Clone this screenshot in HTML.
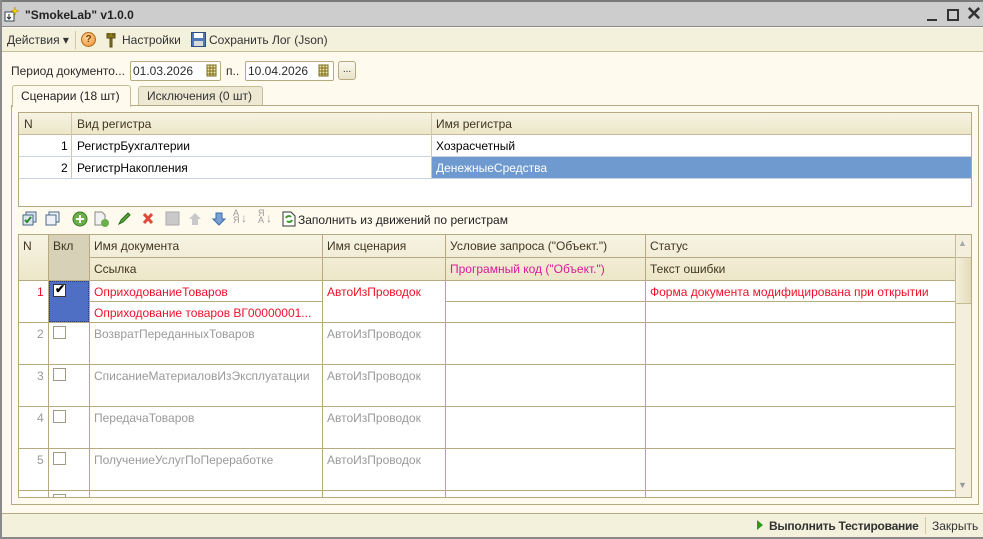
<!DOCTYPE html>
<html><head><meta charset="utf-8"><style>
*{box-sizing:border-box;margin:0;padding:0}
body{width:983px;height:539px;position:relative;overflow:hidden;background:#fefaee;font-family:"Liberation Sans",sans-serif;font-size:12px;color:#2b2b2b}
.a{position:absolute}
.t{position:absolute;white-space:nowrap}
.hd{background:linear-gradient(#f6f3e3,#ede6c8)}
.hl{position:absolute;height:1px;background:#b7aa80}
.vl{position:absolute;width:1px;background:#b7aa80}
.red{color:#f0102a}
.gr{color:#9a9a9a}
.cb{position:absolute;width:13px;height:13px;border:1px solid #a09a86;background:#fff}
</style></head><body>
<div class="a" style="left:0;top:0;width:983px;height:27px;background:#cdcdcd;border-top:2px solid #7a7a7a;border-bottom:1px solid #8a8a8a"></div>
<div class="a" style="left:0;top:0;width:2px;height:539px;background:#8a8a8a"></div>
<div class="a" style="left:0;top:537px;width:983px;height:2px;background:#8a8a8a"></div>
<svg class="a" style="left:4px;top:6px" width="16" height="16"><rect x="1" y="6" width="9" height="9" fill="#fff" stroke="#345"/><path d="M5 8v5M3 11l2 2 2-2" stroke="#222" fill="none"/><path d="M11 1l1 3 3 1-3 1-1 3-1-3-3-1 3-1z" fill="#f5d21a" stroke="#b89000" stroke-width=".5"/></svg>
<div class="t" style="left:25px;top:8px;font-weight:bold;font-size:12px;color:#222">"SmokeLab" v1.0.0</div>
<div class="a" style="left:927px;top:19px;width:10px;height:2px;background:#333"></div>
<div class="a" style="left:947px;top:9px;width:12px;height:12px;border:2px solid #333"></div>
<div class="t" style="left:966px;top:3px;font-size:19px;font-weight:bold;color:#333">✕</div>
<div class="a" style="left:2px;top:28px;width:981px;height:24px;background:#f3f0dc;border-bottom:1px solid #c5bc98"></div>
<div class="t" style="left:7px;top:33px;color:#333">Действия ▾</div>
<div class="a" style="left:75px;top:31px;width:1px;height:18px;background:#cfc7a8"></div>
<div class="a" style="left:81px;top:32px;width:15px;height:15px;border-radius:50%;background:radial-gradient(circle at 40% 35%,#ffd9a0,#e88b2a);border:1px solid #b86a1a;font-size:10px;font-weight:bold;color:#7a3a00;text-align:center;line-height:13px">?</div>
<svg class="a" style="left:104px;top:32px" width="14" height="16"><path d="M3 1v5h8V1M5 1v3M9 1v3M6 6h2v9H6z" fill="#8a7a20" stroke="#5a4a10" stroke-width="1"/></svg>
<div class="t" style="left:122px;top:33px;color:#333">Настройки</div>
<svg class="a" style="left:191px;top:32px" width="15" height="15"><rect x=".5" y=".5" width="14" height="14" fill="#4e78b8" stroke="#2c4f86"/><rect x="3" y="1" width="9" height="5" fill="#fff"/><rect x="3" y="9" width="9" height="5" fill="#d9d9d9"/></svg>
<div class="t" style="left:209px;top:33px;color:#333">Сохранить Лог (Json)</div>
<div class="t" style="left:11px;top:64px">Период документо...</div>
<div class="a" style="left:130px;top:61px;width:91px;height:20px;background:#fff;border:1px solid #b7aa80;border-radius:2px"></div>
<div class="t" style="left:133px;top:64px">01.03.2026</div>
<svg class="a" style="left:206px;top:64px" width="11" height="13"><path d="M1 1h9v11H1zM1 4h9M1 7h9M1 10h9M4 1v11M7 1v11" fill="#f0e6a0" stroke="#7a6a20" stroke-width="1"/></svg>
<div class="t" style="left:226px;top:64px">п..</div>
<div class="a" style="left:245px;top:61px;width:89px;height:20px;background:#fff;border:1px solid #b7aa80;border-radius:2px"></div>
<div class="t" style="left:248px;top:64px">10.04.2026</div>
<svg class="a" style="left:318px;top:64px" width="11" height="13"><path d="M1 1h9v11H1zM1 4h9M1 7h9M1 10h9M4 1v11M7 1v11" fill="#f0e6a0" stroke="#7a6a20" stroke-width="1"/></svg>
<div class="a" style="left:338px;top:61px;width:18px;height:19px;border:1px solid #b7aa80;border-radius:3px;background:linear-gradient(#fbf9ef,#e9e3c8);font-size:10px;text-align:center;line-height:15px">...</div>
<div class="a" style="left:138px;top:86px;width:125px;height:20px;background:#ede8d2;border:1px solid #c5bb98;border-bottom:none;border-radius:3px 3px 0 0"></div>
<div class="t" style="left:147px;top:89px;color:#333">Исключения (0 шт)</div>
<div class="a" style="left:11px;top:105px;width:968px;height:400px;border:1px solid #b7aa80;background:#fefaee"></div>
<div class="a" style="left:12px;top:85px;width:119px;height:22px;background:#fefaee;border:1px solid #c5bb98;border-bottom:none;border-radius:3px 3px 0 0"></div>
<div class="t" style="left:21px;top:89px;color:#222">Сценарии (18 шт)</div>
<div class="a" style="left:18px;top:112px;width:954px;height:95px;border:1px solid #b7aa80;background:#fff"></div>
<div class="a hd" style="left:19px;top:113px;width:952px;height:22px;border-bottom:1px solid #c5bb98"></div>
<div class="vl" style="left:71px;top:113px;height:66px;background:#d0c8a8"></div>
<div class="vl" style="left:431px;top:113px;height:66px;background:#d0c8a8"></div>
<div class="t" style="left:24px;top:117px;color:#403520">N</div>
<div class="t" style="left:77px;top:117px;color:#403520">Вид регистра</div>
<div class="t" style="left:436px;top:117px;color:#403520">Имя регистра</div>
<div class="hl" style="left:19px;top:156px;width:952px;background:#c8d4e6"></div>
<div class="hl" style="left:19px;top:178px;width:952px;background:#c8d4e6"></div>
<div class="t" style="left:61px;top:139px;color:#000">1</div>
<div class="t" style="left:77px;top:139px;color:#000">РегистрБухгалтерии</div>
<div class="t" style="left:436px;top:139px;color:#000">Хозрасчетный</div>
<div class="t" style="left:61px;top:161px;color:#000">2</div>
<div class="t" style="left:77px;top:161px;color:#000">РегистрНакопления</div>
<div class="a" style="left:432px;top:157px;width:539px;height:21px;background:#6f9acf"></div>
<div class="t" style="left:436px;top:161px;color:#fff">ДенежныеСредства</div>
<svg class="a" style="left:22px;top:211px" width="140" height="16">
<rect x="4" y="1" width="10" height="10" fill="#dde6ef" stroke="#4a6a8a"/><rect x="1" y="4" width="10" height="10" fill="#dde6ef" stroke="#4a6a8a"/><path d="M3 9l2 2 4-5" stroke="#2a8a2a" stroke-width="2" fill="none"/>
<rect x="27" y="1" width="10" height="10" fill="#eef2f6" stroke="#4a6a8a"/><rect x="24" y="4" width="10" height="10" fill="#eef2f6" stroke="#4a6a8a"/>
<circle cx="58" cy="8" r="7" fill="#6ab04a" stroke="#3a7a2a"/><path d="M58 4v8M54 8h8" stroke="#fff" stroke-width="2"/>
<path d="M73 1h7l3 3v10H73z" fill="#f2f2f2" stroke="#888"/><circle cx="83" cy="12" r="4" fill="#6ab04a"/>
<path d="M97 13l2-4 7-7 2 2-7 7z" fill="#5aa83a" stroke="#2a6a1a"/>
<path d="M122 3l8 9M130 3l-8 9" stroke="#e04a3a" stroke-width="3"/>
</svg>
<svg class="a" style="left:165px;top:211px" width="115" height="16">
<rect x="1" y="1" width="13" height="13" fill="#c9c9c9" stroke="#aaa"/>
<path d="M30 2l6 6h-3v6h-6v-6h-3z" fill="#c9c9c9"/>
<path d="M54 14l6-6h-3V2h-6v6h-3z" fill="#7aa0d8" stroke="#3a6aa8"/>
</svg>
<div class="t" style="left:233px;top:210px;font-size:9px;line-height:7px;color:#999">А<br>Я</div><div class="t" style="left:241px;top:211px;color:#999">↓</div>
<div class="t" style="left:258px;top:210px;font-size:9px;line-height:7px;color:#999">Я<br>А</div><div class="t" style="left:266px;top:211px;color:#999">↓</div>
<svg class="a" style="left:282px;top:211px" width="14" height="16"><path d="M1 1h8l4 4v10H1z" fill="#fff" stroke="#333"/><path d="M4 7a3 3 0 015-1M10 9a3 3 0 01-5 1" stroke="#3a9a2a" stroke-width="2" fill="none"/></svg>
<div class="t" style="left:298px;top:213px;color:#222">Заполнить из движений по регистрам</div>
<div class="a" style="left:18px;top:234px;width:954px;height:264px;border:1px solid #b7aa80;background:#fff"></div>
<div class="a hd" style="left:19px;top:235px;width:936px;height:45px"></div>
<div class="a" style="left:49px;top:235px;width:40px;height:45px;background:#d7d1b8"></div>
<div class="hl" style="left:89px;top:257px;width:866px"></div>
<div class="hl" style="left:19px;top:280px;width:936px"></div>
<div class="t" style="left:23px;top:239px;color:#403520">N</div>
<div class="t" style="left:53px;top:239px;color:#403520">Вкл</div>
<div class="t" style="left:94px;top:239px;color:#403520">Имя документа</div>
<div class="t" style="left:94px;top:262px;color:#403520">Ссылка</div>
<div class="t" style="left:327px;top:239px;color:#403520">Имя сценария</div>
<div class="t" style="left:450px;top:239px;color:#403520">Условие запроса ("Объект.")</div>
<div class="t" style="left:450px;top:262px;color:#d81a9a">Програмный код ("Объект.")</div>
<div class="t" style="left:650px;top:239px;color:#403520">Статус</div>
<div class="t" style="left:650px;top:262px;color:#403520">Текст ошибки</div>
<div class="a" style="left:955px;top:235px;width:16px;height:262px;background:#f3efdc;border-left:1px solid #c5bb98"></div>
<div class="a" style="left:956px;top:257px;width:15px;height:47px;background:linear-gradient(90deg,#f4efdb,#e4dbb8);border-top:1px solid #c5bb98;border-bottom:1px solid #c5bb98"></div>
<div class="t" style="left:958px;top:238px;font-size:9px;color:#aaa">▲</div>
<div class="t" style="left:958px;top:480px;font-size:9px;color:#999">▼</div>
<div class="a" style="left:49px;top:281px;width:40px;height:41px;background:#4f6fc4;outline:1px dotted #2a3a80;outline-offset:-1px"></div>
<div class="cb" style="left:53px;top:284px;border-color:#333"></div><div class="t" style="left:55px;top:282px;font-size:12px;font-weight:bold;color:#000">✔</div>
<div class="t red" style="left:37px;top:285px">1</div>
<div class="t red" style="left:94px;top:285px">ОприходованиеТоваров</div>
<div class="t red" style="left:94px;top:306px">Оприходование товаров ВГ00000001...</div>
<div class="t red" style="left:327px;top:285px">АвтоИзПроводок</div>
<div class="t red" style="left:650px;top:285px">Форма документа модифицирована при открытии</div>
<div class="hl" style="left:89px;top:301px;width:233px;background:#b7aa80"></div>
<div class="hl" style="left:445px;top:301px;width:510px"></div>
<div class="hl" style="left:19px;top:322px;width:936px"></div>
<div class="hl" style="left:19px;top:364px;width:936px"></div>
<div class="hl" style="left:19px;top:406px;width:936px"></div>
<div class="hl" style="left:19px;top:448px;width:936px"></div>
<div class="hl" style="left:19px;top:490px;width:936px"></div>
<div class="vl" style="left:48px;top:235px;height:262px"></div>
<div class="vl" style="left:89px;top:235px;height:262px"></div>
<div class="vl" style="left:322px;top:235px;height:262px"></div>
<div class="vl" style="left:445px;top:235px;height:262px"></div>
<div class="vl" style="left:645px;top:235px;height:262px"></div>
<div class="t gr" style="left:37px;top:327px">2</div><div class="cb" style="left:53px;top:326px"></div>
<div class="t gr" style="left:94px;top:327px">ВозвратПереданныхТоваров</div><div class="t gr" style="left:327px;top:327px">АвтоИзПроводок</div>
<div class="t gr" style="left:37px;top:369px">3</div><div class="cb" style="left:53px;top:368px"></div>
<div class="t gr" style="left:94px;top:369px">СписаниеМатериаловИзЭксплуатации</div><div class="t gr" style="left:327px;top:369px">АвтоИзПроводок</div>
<div class="t gr" style="left:37px;top:411px">4</div><div class="cb" style="left:53px;top:410px"></div>
<div class="t gr" style="left:94px;top:411px">ПередачаТоваров</div><div class="t gr" style="left:327px;top:411px">АвтоИзПроводок</div>
<div class="t gr" style="left:37px;top:453px">5</div><div class="cb" style="left:53px;top:452px"></div>
<div class="t gr" style="left:94px;top:453px">ПолучениеУслугПоПереработке</div><div class="t gr" style="left:327px;top:453px">АвтоИзПроводок</div>
<div class="a" style="left:53px;top:494px;width:13px;height:3px;border:1px solid #a09a86;border-bottom:none"></div>
<div class="a" style="left:2px;top:513px;width:981px;height:24px;background:#f3f0dc;border-top:1px solid #b7aa80"></div>
<svg class="a" style="left:756px;top:519px" width="8" height="12"><path d="M1 1l6 5-6 5z" fill="#2a9a1a"/></svg>
<div class="t" style="left:769px;top:519px;font-weight:bold;color:#333;letter-spacing:-0.25px">Выполнить Тестирование</div>
<div class="a" style="left:925px;top:517px;width:1px;height:17px;background:#d0c8a8"></div>
<div class="t" style="left:932px;top:519px;color:#333">Закрыть</div>
</body></html>
